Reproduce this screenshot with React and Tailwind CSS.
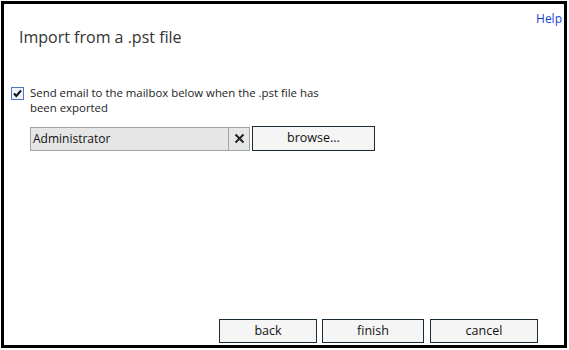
import React from "react";

const font = { fontFamily: '"Segoe UI", "Open Sans", "Liberation Sans", sans-serif' };

const Button = ({ children, className = "" }) => (
    <div className={`flex items-center justify-center border border-[#1c2a33] bg-[#f5f5f5] text-[12.5px] text-[#111] ${className}`}>
        {children}
    </div>
);

const App = () => {
    return (
        <div className="w-[569px] h-[350px] bg-white p-px" style={font}>
            <div className="h-[347px] w-[566px] border-[3px] border-black flex flex-col">
                <div className="flex justify-end pr-[2px] pt-[7px] h-[22px]">
                    <span className="text-[12px] leading-[16px] text-[#1a3fd0]">Help</span>
                </div>
                <div className="pl-[15px] text-[16px] leading-[22px] text-[#333]">
                    Import from a .pst file
                </div>

                <div className="flex items-start pl-[7px] mt-[37px]">
                    <span className="mt-[2px] w-[13px] h-[13px] border border-[#5577b8] bg-[#eef2fa] flex items-center justify-center">
                        <svg width="11" height="11" viewBox="0 0 11 11">
                            <path d="M2 5.5 L4.3 8 L9 2.5" stroke="#111" strokeWidth="2" fill="none" />
                        </svg>
                    </span>
                    <div className="ml-[6px] text-[11.4px] leading-[15px] text-[#222] w-[296px]">
                        Send email to the mailbox below when the .pst file has been exported
                    </div>
                </div>

                <div className="flex items-center pl-[26px] mt-[11px]">
                    <div className="flex items-center w-[220px] h-[24px] border border-[#9ea4a8] bg-[#e6e6e6]">
                        <span className="flex-1 pl-[2px] text-[12px] text-[#111]">Administrator</span>
                        <span className="w-[21px] h-full border-l border-[#9ea4a8] flex items-center justify-center">
                            <svg width="11" height="11" viewBox="0 0 11 11">
                                <path d="M1.5 1.5 L9.5 9.5 M9.5 1.5 L1.5 9.5" stroke="#222" strokeWidth="2" />
                            </svg>
                        </span>
                    </div>
                    <Button className="ml-[2px] w-[123px] h-[25px]">browse...</Button>
                </div>

                <div className="flex-1" />

                <div className="flex justify-end gap-[5px] pr-[26px] pb-[2px]">
                    <Button className="w-[98px] h-[24px]">back</Button>
                    <Button className="w-[102px] h-[24px]">finish</Button>
                    <Button className="w-[108px] h-[24px] ml-[1px]">cancel</Button>
                </div>
            </div>
        </div>
    );
};

export default App;
